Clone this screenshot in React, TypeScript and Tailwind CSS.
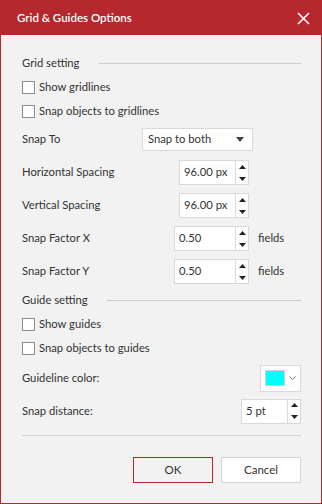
import React from "react";

const font = { fontFamily: 'Lato, "Noto Sans", sans-serif' };

const Checkbox = ({ label }: { label: string }) => (
  <div className="flex items-center gap-[4px]">
    <span className="w-[13px] h-[13px] border border-[#8c8c8c] bg-white" />
    <span>{label}</span>
  </div>
);

const SectionHeader = ({ label, width }: { label: string; width: string }) => (
  <div className="flex items-center h-[24px]">
    <span className={width}>{label}</span>
    <div className="flex-1 h-px bg-[#cdcdd6]" />
  </div>
);

const Arrows = () => (
  <div className="flex flex-col items-center justify-center gap-[8px] w-[13px] border-l border-[#dcdcdc]">
    <svg width="7" height="4" viewBox="0 0 7 4">
      <path d="M3.5 0 L7 4 L0 4 Z" fill="#222" />
    </svg>
    <svg width="7" height="4" viewBox="0 0 7 4">
      <path d="M0 0 L7 0 L3.5 4 Z" fill="#222" />
    </svg>
  </div>
);

const Spinner = ({ value, width, height = "h-[25px]" }: { value: string; width: string; height?: string }) => (
  <div className={`flex ${width} ${height} bg-white border border-[#d9d9d9]`}>
    <div className="flex-1 flex items-center pl-[4px]">{value}</div>
    <Arrows />
  </div>
);

export default function App() {
  return (
    <div
      className="w-[322px] h-[504px] bg-[#f2f2f2] border border-[#b4282e] flex flex-col text-[11.25px] text-[#333]"
      style={font}
    >
      <div className="h-[34px] bg-[#b4282e] flex items-center justify-between pl-[16px] pr-[11px] text-white shrink-0">
        <span className="text-[11.5px] font-semibold">Grid &amp; Guides Options</span>
        <svg width="13" height="13" viewBox="0 0 13 13" className="mt-[1px]">
          <path d="M1 1 L12 12 M12 1 L1 12" stroke="#fff" strokeWidth="1.6" />
        </svg>
      </div>

      <div className="flex flex-col pl-[21px] pr-[20px] pt-[16px]">
        <SectionHeader label="Grid setting" width="w-[77px]" />
        <div className="h-[25px] flex items-center">
          <Checkbox label="Show gridlines" />
        </div>
        <div className="h-[23px] flex items-center">
          <Checkbox label="Snap objects to gridlines" />
        </div>

        <div className="h-[33px] flex items-center">
          <span className="w-[120px]">Snap To</span>
          <div className="w-[111px] h-[23px] bg-white border border-[#d9d9d9] flex items-center justify-between pl-[5px] pr-[8px]">
            <span>Snap to both</span>
            <svg width="8" height="5" viewBox="0 0 8 5">
              <path d="M0 0 L8 0 L4 5 Z" fill="#444" />
            </svg>
          </div>
        </div>

        <div className="h-[33px] flex items-center">
          <span className="w-[157px]">Horizontal Spacing</span>
          <Spinner value="96.00 px" width="w-[70px]" />
        </div>
        <div className="h-[33px] flex items-center">
          <span className="w-[157px]">Vertical Spacing</span>
          <Spinner value="96.00 px" width="w-[70px]" />
        </div>
        <div className="h-[33px] flex items-center">
          <span className="w-[152px]">Snap Factor X</span>
          <Spinner value="0.50" width="w-[75px]" />
          <span className="ml-[9px]">fields</span>
        </div>
        <div className="h-[33px] flex items-center">
          <span className="w-[152px]">Snap Factor Y</span>
          <Spinner value="0.50" width="w-[75px]" />
          <span className="ml-[9px]">fields</span>
        </div>

        <SectionHeader label="Guide setting" width="w-[85px]" />
        <div className="h-[24px] flex items-center">
          <Checkbox label="Show guides" />
        </div>
        <div className="h-[24px] flex items-center">
          <Checkbox label="Snap objects to guides" />
        </div>

        <div className="h-[36px] flex items-center justify-between">
          <span>Guideline color:</span>
          <div className="w-[41px] h-[27px] bg-white border border-[#d9d9d9] flex items-center pl-[4px] gap-[4px]">
            <span className="w-[20px] h-[16px] bg-[#00ffff] border border-[#d0d0d0]" />
            <svg width="7" height="5" viewBox="0 0 7 5">
              <path d="M0.5 0.5 L3.5 3.5 L6.5 0.5" stroke="#777" strokeWidth="1" fill="none" />
            </svg>
          </div>
        </div>
        <div className="h-[30px] flex items-center justify-between">
          <span>Snap distance:</span>
          <Spinner value="5 pt" width="w-[60px]" height="h-[25px]" />
        </div>

        <div className="mt-[9px] h-px bg-[#d0d0d8]" />

        <div className="mt-[21px] flex justify-end gap-[8px]">
          <button className="w-[80px] h-[26px] border border-[#b4282e] bg-[#f2f2f2] text-[11.5px] text-[#333]">
            OK
          </button>
          <button className="w-[80px] h-[26px] border border-[#d4d4d4] bg-white text-[11.5px] text-[#333]">
            Cancel
          </button>
        </div>
      </div>
    </div>
  );
}
